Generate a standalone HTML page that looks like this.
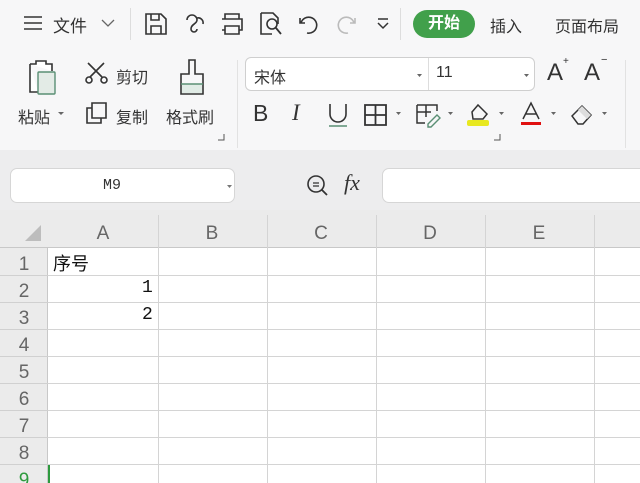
<!DOCTYPE html>
<html><head><meta charset="utf-8"><style>
*{margin:0;padding:0;box-sizing:border-box}
body{width:640px;height:483px;overflow:hidden;background:#fff;font-family:"Liberation Sans","Noto Sans CJK SC",sans-serif;color:#333;position:relative}
.a{position:absolute}
.t{position:absolute;font-size:16px;white-space:nowrap}
svg{position:absolute;overflow:visible}
</style></head><body>
<div class="a" style="left:0;top:0;width:640px;height:150px;background:#f7f7f8"></div>
<div class="a" style="left:0;top:150px;width:640px;height:60px;background:#ededee"></div>
<svg style="left:23px;top:15px" width="20" height="16"><path d="M1 2h18M1 8h18M1 14h18" stroke="#333" stroke-width="1.6" fill="none"/></svg>
<div class="t" style="left:53px;top:12px;font-size:17px">文件</div>
<svg style="left:101px;top:18px" width="14" height="10"><path d="M1 2l6 6 6-6" stroke="#666" stroke-width="1.3" fill="none"/></svg>
<div class="a" style="left:130px;top:8px;width:1px;height:32px;background:#ddd"></div>
<svg style="left:144px;top:12px" width="24" height="24"><path d="M2 2h15l5 5v15H2z M7 2v6h8V2 M7 22v-8h10v8" stroke="#333" stroke-width="1.6" fill="none"/></svg>
<svg style="left:183px;top:12px" width="24" height="24"><path d="M4 8a5 5 0 0 1 10 0c0 4-6 4-6 9a3 3 0 0 0 6 0 M14 6a5 5 0 0 1 6 6" stroke="#333" stroke-width="1.6" fill="none"/></svg>
<svg style="left:219px;top:12px" width="26" height="24"><path d="M6 7V2h14v5 M3 7h20v11h-3 M6 18H3 M6 14h14v8H6z" stroke="#333" stroke-width="1.6" fill="none"/></svg>
<svg style="left:258px;top:11px" width="26" height="26"><path d="M3 2h12l5 5v6 M3 2v21h11" stroke="#333" stroke-width="1.6" fill="none"/><circle cx="14" cy="13" r="5" stroke="#333" stroke-width="1.6" fill="none"/><path d="M18 17l5 6" stroke="#333" stroke-width="1.8"/></svg>
<svg style="left:298px;top:14px" width="22" height="20"><path d="M2 4v5h5 M3 9a8 8 0 1 1 6 10" stroke="#333" stroke-width="1.6" fill="none"/></svg>
<svg style="left:336px;top:14px" width="22" height="20"><path d="M19 4v5h-5 M18 9a8 8 0 1 0-6 10" stroke="#bbb" stroke-width="1.6" fill="none"/></svg>
<svg style="left:377px;top:17px" width="12" height="14"><path d="M1 2h10 M1 6l5 5 5-5" stroke="#333" stroke-width="1.5" fill="none"/></svg>
<div class="a" style="left:400px;top:8px;width:1px;height:32px;background:#ddd"></div>
<div class="a" style="left:413px;top:10px;width:62px;height:28px;border-radius:14px;background:#41a04b;color:#fff;font-size:16px;font-weight:bold;text-align:center;line-height:28px">开始</div>
<div class="t" style="left:490px;top:13px">插入</div>
<div class="t" style="left:555px;top:13px">页面布局</div>
<svg style="left:26px;top:58px" width="36" height="40"><path d="M4 6h6v-3h10v3h6v7 M4 6v28h8" stroke="#333" stroke-width="1.6" fill="#fff"/><rect x="12" y="14" width="17" height="22" rx="1" fill="#e3ebe6" stroke="#5a8f74" stroke-width="1.4"/></svg>
<div class="t" style="left:18px;top:104px">粘贴</div>
<svg style="left:58px;top:112px" width="6" height="4"><path d="M0 0h6l-3 3z" fill="#666"/></svg>
<svg style="left:84px;top:61px" width="26" height="24"><path d="M4 2l14 14 M20 2L6 16" stroke="#333" stroke-width="1.6"/><circle cx="5" cy="19" r="3" stroke="#333" stroke-width="1.6" fill="none"/><circle cx="20" cy="19" r="3" stroke="#333" stroke-width="1.6" fill="none"/></svg>
<div class="t" style="left:116px;top:64px">剪切</div>
<svg style="left:85px;top:101px" width="24" height="24"><path d="M7 2h14v15H7z M7 7H2v15h14v-5" stroke="#333" stroke-width="1.6" fill="none"/></svg>
<div class="t" style="left:116px;top:104px">复制</div>
<svg style="left:178px;top:58px" width="28" height="40"><path d="M11 2h6v14h8v20H3V16h8z" stroke="#333" stroke-width="1.6" fill="none"/><rect x="4" y="26" width="20" height="9" fill="#e0ebe5"/><path d="M3 26h22" stroke="#5a8f74" stroke-width="1.4"/></svg>
<div class="t" style="left:166px;top:104px">格式刷</div>
<svg style="left:218px;top:134px" width="8" height="8"><path d="M6 0v6H0" stroke="#555" fill="none"/></svg>
<div class="a" style="left:237px;top:60px;width:1px;height:88px;background:#e2e2e2"></div>
<div class="a" style="left:245px;top:57px;width:290px;height:34px;border:1px solid #cfcfcf;border-radius:6px;background:#fff"></div>
<div class="a" style="left:428px;top:58px;width:1px;height:32px;background:#ddd"></div>
<div class="t" style="left:254px;top:64px">宋体</div>
<svg style="left:417px;top:74px" width="5" height="3"><path d="M0 0h5l-2.5 3z" fill="#666"/></svg>
<div class="t" style="left:436px;top:64px">11</div>
<svg style="left:524px;top:74px" width="5" height="3"><path d="M0 0h5l-2.5 3z" fill="#666"/></svg>
<div class="t" style="left:547px;top:59px;font-size:24px;font-weight:300">A</div>
<div class="t" style="left:563px;top:56px;font-size:10px">+</div>
<div class="t" style="left:584px;top:59px;font-size:24px;font-weight:300">A</div>
<div class="t" style="left:601px;top:54px;font-size:11px">−</div>
<div class="t" style="left:253px;top:100px;font-size:23px">B</div>
<div class="t" style="left:292px;top:100px;font-size:23px;font-style:italic;font-family:'Liberation Serif',serif">I</div>
<svg style="left:328px;top:103px" width="20" height="24"><path d="M2 1v10a8 8 0 0 0 16 0V1" stroke="#333" stroke-width="1.6" fill="none"/><path d="M1 23h18" stroke="#5a8f74" stroke-width="1.4"/></svg>
<svg style="left:364px;top:104px" width="24" height="22"><path d="M1 1h21v20H1z M11.5 1v20 M1 11h21" stroke="#333" stroke-width="1.8" fill="none"/></svg>
<svg style="left:396px;top:112px" width="5" height="3"><path d="M0 0h5l-2.5 3z" fill="#666"/></svg>
<svg style="left:416px;top:103px" width="26" height="24"><path d="M1 2h20v6 M1 2v18h8 M1 9h14 M10 2v12" stroke="#333" stroke-width="1.5" fill="none"/><path d="M12 21l9-9 3 3-9 9h-3z" stroke="#5a8f74" stroke-width="1.4" fill="none"/></svg>
<svg style="left:448px;top:112px" width="5" height="3"><path d="M0 0h5l-2.5 3z" fill="#666"/></svg>
<svg style="left:466px;top:102px" width="26" height="26"><path d="M6 10l6-7 9 9-4 5H7z" stroke="#333" stroke-width="1.5" fill="none"/><rect x="1" y="18" width="22" height="6" rx="2" fill="#e8e820"/></svg>
<svg style="left:499px;top:112px" width="5" height="3"><path d="M0 0h5l-2.5 3z" fill="#666"/></svg>
<svg style="left:520px;top:102px" width="22" height="24"><path d="M3 17l8-16 8 16 M6 12h10" stroke="#333" stroke-width="1.5" fill="none"/><rect x="1" y="20" width="20" height="3" fill="#e01010"/></svg>
<svg style="left:551px;top:112px" width="5" height="3"><path d="M0 0h5l-2.5 3z" fill="#666"/></svg>
<svg style="left:570px;top:104px" width="28" height="22"><path d="M2 12l10-10 9 9-8 9H8z" stroke="#333" stroke-width="1.5" fill="none"/><path d="M12 2l9 9-4 4-9-9z" fill="#ddd"/></svg>
<svg style="left:602px;top:112px" width="5" height="3"><path d="M0 0h5l-2.5 3z" fill="#666"/></svg>
<svg style="left:494px;top:134px" width="8" height="8"><path d="M6 0v6H0" stroke="#555" fill="none"/></svg>
<div class="a" style="left:625px;top:60px;width:1px;height:88px;background:#e2e2e2"></div>
<div class="a" style="left:10px;top:168px;width:225px;height:35px;border:1px solid #d6d6d6;border-radius:7px;background:#fff"></div>
<div class="t" style="left:103px;top:177px;font-family:'Liberation Mono',monospace;font-size:15px">M9</div>
<svg style="left:227px;top:185px" width="5" height="3"><path d="M0 0h5l-2.5 3z" fill="#777"/></svg>
<svg style="left:306px;top:174px" width="24" height="24"><circle cx="10" cy="10" r="8" stroke="#333" stroke-width="1.6" fill="none"/><path d="M7 9h6M7 12h6" stroke="#333" stroke-width="1.3"/><path d="M16 16l5 5" stroke="#333" stroke-width="1.8"/></svg>
<div class="t" style="left:344px;top:170px;font-size:22px;font-style:italic;font-family:'Liberation Serif',serif">fx</div>
<div class="a" style="left:382px;top:168px;width:270px;height:35px;border:1px solid #d6d6d6;border-radius:7px;background:#fff"></div>
<div class="a" style="left:0;top:210px;width:640px;height:38px;background:#ebebeb;border-bottom:1px solid #c8c8c8"></div>
<div class="a" style="left:0;top:248px;width:48px;height:235px;background:#ebebeb;border-right:1px solid #c8c8c8"></div>
<svg style="left:25px;top:225px" width="16" height="16"><path d="M16 0v16H0z" fill="#bdbdbd"/></svg>
<div class="t" style="left:53px;top:250px;font-size:18px;color:#111">序号</div>
<div class="t" style="left:142px;top:278px;font-size:18px;font-family:'Liberation Mono',monospace;color:#111">1</div>
<div class="t" style="left:142px;top:305px;font-size:18px;font-family:'Liberation Mono',monospace;color:#111">2</div>
<div class="a" style="left:48px;top:464px;width:2px;height:19px;background:#2e9a3e"></div>
<svg style="left:0;top:0" width="640" height="483">
<g stroke="#d4d4d4" stroke-width="1">
<path d="M158.5 215V483M267.5 215V483M376.5 215V483M485.5 215V483M594.5 215V483"/>
<path d="M48 275.5H640M48 302.5H640M48 329.5H640M48 356.5H640M48 383.5H640M48 410.5H640M48 437.5H640M48 464.5H640"/>
<path d="M0 275.5H48M0 302.5H48M0 329.5H48M0 356.5H48M0 383.5H48M0 410.5H48M0 437.5H48M0 464.5H48" stroke="#d0d0d0"/>
</g>
<g font-family="Liberation Sans" font-size="19" fill="#666" text-anchor="middle">
<text x="103" y="239">A</text><text x="212" y="239">B</text><text x="321" y="239">C</text><text x="430" y="239">D</text><text x="539" y="239">E</text>
<text x="24" y="270">1</text><text x="24" y="297">2</text><text x="24" y="324">3</text><text x="24" y="351">4</text><text x="24" y="378">5</text><text x="24" y="405">6</text><text x="24" y="432">7</text><text x="24" y="459">8</text><text x="24" y="486" fill="#2e9a3e">9</text>
</g>
</svg>
</body></html>
